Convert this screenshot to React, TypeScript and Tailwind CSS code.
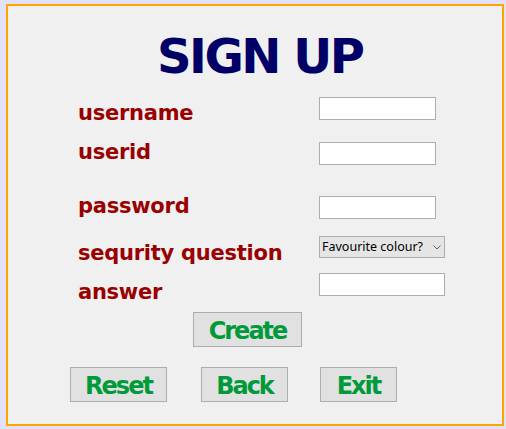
import React from "react";

const labelClass =
  "block h-[24px] text-[21px] leading-[24px] font-bold tracking-[-0.25px] text-[#990000] whitespace-nowrap";
const inputClass =
  "block h-[23px] border border-[#abadb3] bg-white outline-none";
const buttonClass =
  "flex h-[35px] items-center justify-center border border-[#adadad] bg-[#e1e1e1] pt-[3px] text-[24px] leading-none font-bold tracking-[-2px] text-[#009a3a]";

export default function App() {
  return (
    <div
      className="w-[506px] h-[429px] bg-[#e1e1f8] pt-[4px] pl-[6px]"
      style={{ fontFamily: '"DejaVu Sans", Verdana, sans-serif' }}
    >
      <div className="w-[498px] h-[422px] border-2 border-[#ffa500] bg-[#f0f0f0] flex flex-col">
        {/* Title */}
        <h1 className="mt-[26px] ml-[149px] h-[48px] text-[48px] leading-[48px] font-bold tracking-[-2.5px] text-[#000066] whitespace-nowrap">
          SIGN UP
        </h1>

        {/* Form */}
        <div className="flex ml-[70px] h-[224px]">
          <div className="w-[241px] flex flex-col">
            <span className={`${labelClass} mt-[21px]`}>username</span>
            <span className={`${labelClass} mt-[15px]`}>userid</span>
            <span className={`${labelClass} mt-[30px]`}>password</span>
            <span className={`${labelClass} mt-[23px]`}>sequrity question</span>
            <span className={`${labelClass} mt-[15px]`}>answer</span>
          </div>
          <div className="flex flex-col">
            <input className={`${inputClass} w-[117px] mt-[17px]`} />
            <input className={`${inputClass} w-[117px] mt-[22px]`} />
            <input type="password" className={`${inputClass} w-[117px] mt-[31px]`} />
            <div className="mt-[17px] flex h-[22px] w-[126px] items-center justify-between border border-[#acacac] bg-[#e5e5e5] pl-[2px] pr-[3px]">
              <span
                className="text-[12.5px] leading-none text-black whitespace-nowrap"
                style={{ fontFamily: '"Noto Sans", "Open Sans", sans-serif' }}
              >
                Favourite colour?
              </span>
              <svg width="8" height="5" viewBox="0 0 8 5" fill="none">
                <path d="M0.5 0.5L4 4L7.5 0.5" stroke="#606060" strokeWidth="1" />
              </svg>
            </div>
            <input className={`${inputClass} w-[126px] mt-[15px]`} />
          </div>
        </div>

        {/* Create */}
        <div className="mt-[8px] ml-[185px]">
          <button className={`${buttonClass} w-[109px]`}>Create</button>
        </div>

        {/* Bottom buttons */}
        <div className="mt-[20px] ml-[62px] flex">
          <button className={`${buttonClass} w-[97px]`}>Reset</button>
          <button className={`${buttonClass} w-[87px] ml-[34px]`}>Back</button>
          <button className={`${buttonClass} w-[77px] ml-[32px]`}>Exit</button>
        </div>
      </div>
    </div>
  );
}
